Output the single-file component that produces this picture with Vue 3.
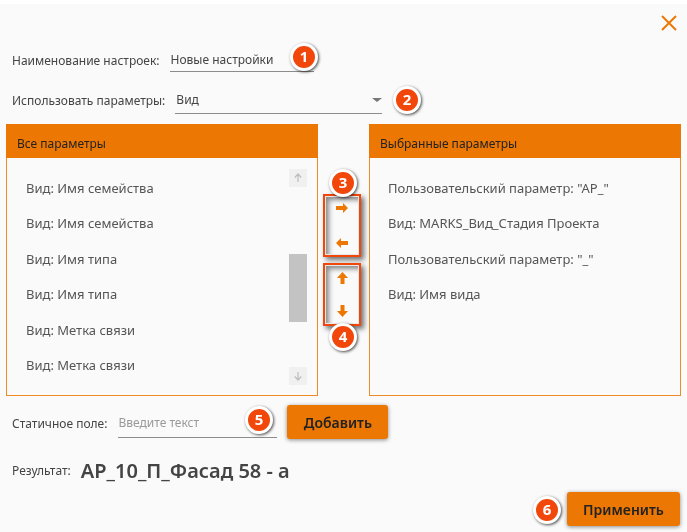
<script setup>
const allParams = ['Вид: Имя семейства','Вид: Имя семейства','Вид: Имя типа','Вид: Имя типа','Вид: Метка связи','Вид: Метка связи']
const chosen = ['Пользовательский параметр: "АР_"','Вид: MARKS_Вид_Стадия Проекта','Пользовательский параметр: "_"','Вид: Имя вида']
</script>

<template>
  <div class="page">
    <div class="close-row">
      <svg class="close" width="18" height="18" viewBox="0 0 18 18"><path d="M2 2 L16 16 M16 2 L2 16" stroke="#ED7703" stroke-width="2" fill="none"/></svg>
    </div>

    <div class="row name-row">
      <span class="label">Наименование настроек:</span>
      <div class="field name-field">Новые настройки</div>
      <span class="badge b1">1</span>
    </div>

    <div class="row use-row">
      <span class="label">Использовать параметры:</span>
      <div class="field use-field">Вид<i class="caret"></i></div>
      <span class="badge b2">2</span>
    </div>

    <div class="columns">
      <section class="panel">
        <header>Все параметры</header>
        <div class="panel-body">
          <ul><li v-for="(p, i) in allParams" :key="i">{{ p }}</li></ul>
          <div class="scrollbar">
            <div class="sb-btn">
              <svg width="10" height="10" viewBox="0 0 10 10"><path d="M5 1 V9 M1.800 4.500 L5 1 L8.200 4.500" stroke="#bdbdbd" stroke-width="1.200" fill="none"/></svg>
            </div>
            <div class="thumb"></div>
            <div class="sb-btn last">
              <svg width="10" height="10" viewBox="0 0 10 10"><path d="M5 9 V1 M1.800 5.500 L5 9 L8.200 5.500" stroke="#bdbdbd" stroke-width="1.200" fill="none"/></svg>
            </div>
          </div>
        </div>
      </section>

      <div class="mover">
        <span class="badge b3">3</span>
        <div class="move-group">
          <svg width="12" height="10" viewBox="0 0 12 10"><path d="M12 5 L7 0 V3 H0 V7 H7 V10 Z" fill="#ED7703"/></svg>
          <svg width="12" height="10" viewBox="0 0 12 10"><path d="M0 5 L5 0 V3 H12 V7 H5 V10 Z" fill="#ED7703"/></svg>
        </div>
        <div class="move-group second">
          <svg width="11" height="12" viewBox="0 0 11 12"><path d="M5.500 0 L11 6 H7.500 V12 H3.500 V6 H0 Z" fill="#ED7703"/></svg>
          <svg width="11" height="12" viewBox="0 0 11 12"><path d="M5.500 12 L11 6 H7.500 V0 H3.500 V6 H0 Z" fill="#ED7703"/></svg>
        </div>
        <span class="badge b4">4</span>
      </div>

      <section class="panel">
        <header>Выбранные параметры</header>
        <div class="panel-body">
          <ul class="right"><li v-for="(p, i) in chosen" :key="i">{{ p }}</li></ul>
        </div>
      </section>
    </div>

    <div class="row static-row">
      <span class="label">Статичное поле:</span>
      <div class="field static-field">Введите текст</div>
      <span class="badge b5">5</span>
      <button class="btn">Добавить</button>
    </div>

    <div class="row result-row">
      <span class="label">Результат:</span>
      <span class="result">АР_10_П_Фасад 58 - а</span>
    </div>

    <div class="apply-row">
      <span class="badge b6">6</span>
      <button class="btn apply">Применить</button>
    </div>
  </div>
</template>

<style>
html, body { margin: 0; background: #fff; }
</style>

<style scoped>
.page {
  box-sizing: border-box;
  width: 687px;
  height: 532px;
  border-top: 4px solid #fff;
  background: #fafafa;
  padding: 0 6px;
  font-family: "Noto Sans", "Open Sans", sans-serif;
  font-size: 12px;
  color: #333;
  overflow: hidden;
  filter: blur(0.35px);
}
.close-row { height: 40px; display: flex; justify-content: flex-end; align-items: flex-start; padding-top: 10px; box-sizing: border-box; padding-right: 3px; }
.row { display: flex; position: relative; align-items: center; padding-left: 6px; }
.label { color: #444; white-space: nowrap; }
.field { box-sizing: border-box; border-bottom: 1px solid #8c8c8c; position: relative; color: #444; }
.name-row { height: 30px; margin-top: 1px; }
.name-field { align-self: flex-start; margin: 3px 0 0 10px; width: 144px; height: 24px; line-height: 24px; padding-left: 1px; }
.use-row { height: 30px; margin-top: 10px; }
.use-field { align-self: flex-start; margin: 3px 0 0 10px; width: 207px; height: 26px; line-height: 24px; padding-left: 1px; }
.caret { position: absolute; right: 0; top: 10px; width: 0; height: 0; border-left: 5px solid transparent; border-right: 5px solid transparent; border-top: 4px solid #777; }
.badge {
  position: absolute;
  box-sizing: border-box;
  width: 28px; height: 28px;
  border-radius: 50%;
  background: #F2470A;
  border: 3px solid #fff;
  box-shadow: 1px 1px 3px rgba(0,0,0,.7);
  color: #fff;
  font-weight: 700;
  font-size: 15px;
  line-height: 21px;
  text-align: center;
  z-index: 3;
}
.b1 { left: 284px; top: -2px; }
.b2 { left: 387px; top: 1px; }
.b3 { left: 11px; top: 45px; }
.b4 { left: 11px; top: 199px; }
.b5 { left: 239px; top: 2px; }
.b6 { left: 527px; top: 4px; }
.columns { display: flex; margin-top: 9px; height: 272px; }
.panel { box-sizing: border-box; width: 312px; height: 272px; border: 1px solid #F08A24; display: flex; flex-direction: column; }
.panel header { height: 34px; flex: none; background: #ED7703; color: #222; line-height: 39px; padding-left: 11px; margin: -1px -1px 0; }
.panel-body { flex: 1; display: flex; position: relative; min-height: 0; }
ul { list-style: none; margin: 0; padding: 13px 0 0 19px; flex: 1; }
ul.right { padding-left: 18px; }
li { height: 35.4px; line-height: 35.4px; color: #555; font-size: 13px; }
.scrollbar { width: 18px; margin: 11px 10px 10px 0; display: flex; flex-direction: column; }
.sb-btn { height: 18px; flex: none; background: #f0f0f0; display: flex; align-items: center; justify-content: center; }
.sb-btn.last { margin-top: auto; }
.thumb { height: 68px; flex: none; background: #c3c3c3; margin-top: 67px; }
.mover { width: 51px; position: relative; display: flex; flex-direction: column; align-items: flex-start; padding: 70px 0 0 5px; box-sizing: border-box; }
.move-group {
  box-sizing: border-box;
  width: 38px; height: 63px;
  border: 2px solid #F2470A;
  outline: 1px solid #e8e8e8;
  outline-offset: -3px;
  box-shadow: inset 4px 4px 5px rgba(0,0,0,.45), 3px 3px 5px rgba(0,0,0,.55);
  display: flex; flex-direction: column; align-items: center; justify-content: space-between;
  padding: 7px 0;
  background: #fafafa;
}
.second { margin-top: 6px; }
.static-row { height: 36px; margin-top: 8px; }
.static-row .label { margin-top: 2px; }
.static-field { margin: 2px 0 0 11px; width: 159px; height: 30px; line-height: 30px; color: #999; }
.btn {
  border: 0; border-radius: 3px; background: #ED7703; color: #222;
  font-family: inherit; font-weight: 600; font-size: 14px;
  box-shadow: 0 1px 4px rgba(0,0,0,.45);
  height: 34px; padding: 0;
}
.static-row .btn { width: 101px; margin-left: 10px; }
.result-row { margin-top: 10px; height: 40px; }
.result { font-size: 20px; font-weight: 600; color: #444; margin-left: 10px; white-space: nowrap; }
.apply-row { display: flex; justify-content: flex-end; position: relative; padding-right: 1px; margin-top: 2px; }
.apply { width: 113px; height: 34px; }
</style>
